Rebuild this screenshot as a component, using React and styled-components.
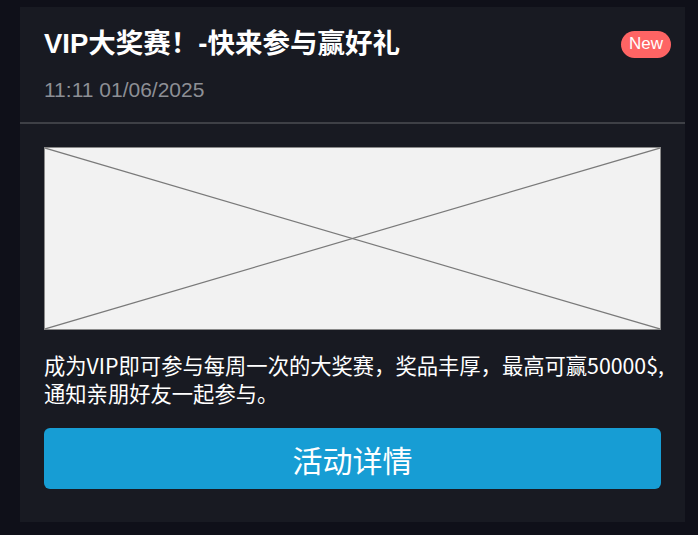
import React from 'react';
import styled, { createGlobalStyle } from 'styled-components';

const GlobalStyle = createGlobalStyle`
  html, body {
    margin: 0;
    padding: 0;
    background: #0f1019;
  }

  body {
    font-family: 'Liberation Sans', 'Noto Sans CJK SC', sans-serif;
    color: #ffffff;
  }
`;

const Page = styled.div`
  padding: 7px 13px 13px 20px;
  min-height: 535px;
  box-sizing: border-box;
`;

const Card = styled.article`
  width: 665px;
  background: #181a22;
  box-sizing: border-box;
  padding-bottom: 33px;
`;

const Header = styled.header`
  padding: 18px 14px 19px 24px;
  border-bottom: 2px solid #3e4046;
`;

const TitleRow = styled.div`
  display: flex;
  align-items: center;
  justify-content: space-between;
`;

const Title = styled.h1`
  margin: 0;
  font-size: 27.5px;
  line-height: 38px;
  font-weight: 700;
  color: #ffffff;
`;

const Badge = styled.span`
  display: inline-flex;
  align-items: center;
  height: 27px;
  padding: 0 8px;
  border-radius: 14px;
  background: #fe6464;
  color: #ffffff;
  font-size: 17px;
`;

const Date = styled.div`
  margin-top: 14px;
  font-size: 21px;
  line-height: 26px;
  color: #8d8f95;
`;

const Body = styled.div`
  padding: 23px 24px 0;
`;

const Placeholder = styled.div`
  height: 183px;
  border: 1px solid #8a8a8a;
  background: #f2f2f2;
  box-sizing: border-box;

  svg {
    display: block;
    width: 100%;
    height: 100%;
  }
`;

const Description = styled.p`
  margin: 21px 0 0;
  font-family: 'Noto Sans CJK SC', 'Liberation Sans', sans-serif;
  font-size: 21.3px;
  line-height: 28px;
  white-space: nowrap;
  color: #ffffff;
`;

const DetailButton = styled.button`
  display: block;
  width: 100%;
  height: 61px;
  margin-top: 21px;
  border: none;
  border-radius: 6px;
  background: #179dd4;
  color: #ffffff;
  font-family: 'Noto Sans CJK SC', sans-serif;
  font-size: 30px;
  cursor: pointer;
`;

const App = () => (
  <Page>
    <GlobalStyle />
    <Card>
      <Header>
        <TitleRow>
          <Title>VIP大奖赛！-快来参与赢好礼</Title>
          <Badge>New</Badge>
        </TitleRow>
        <Date>11:11 01/06/2025</Date>
      </Header>
      <Body>
        <Placeholder>
          <svg viewBox="0 0 100 100" preserveAspectRatio="none">
            <line x1="0" y1="0" x2="100" y2="100" stroke="#7a7a7a" strokeWidth="1.2" vectorEffect="non-scaling-stroke" />
            <line x1="0" y1="100" x2="100" y2="0" stroke="#7a7a7a" strokeWidth="1.2" vectorEffect="non-scaling-stroke" />
          </svg>
        </Placeholder>
        <Description>
          成为VIP即可参与每周一次的大奖赛，奖品丰厚，最高可赢50000$,
          <br />
          通知亲朋好友一起参与。
        </Description>
        <DetailButton>活动详情</DetailButton>
      </Body>
    </Card>
  </Page>
);

export default App;
